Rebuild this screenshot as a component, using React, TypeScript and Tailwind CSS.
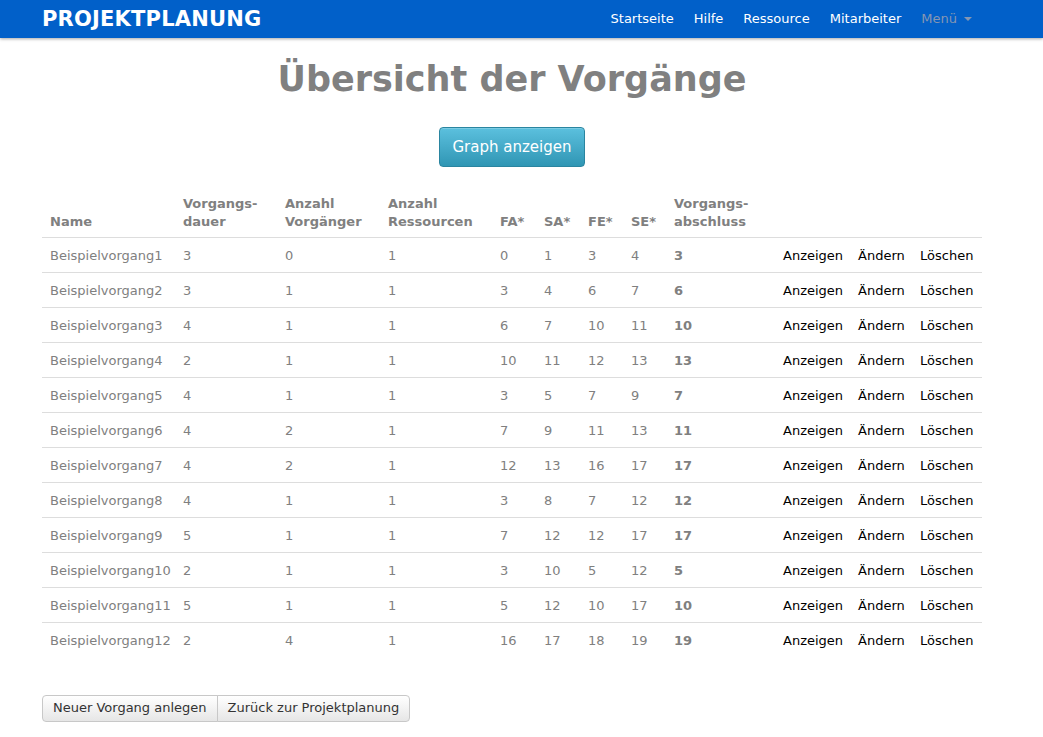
const font = "font-['DejaVu_Sans',Verdana,sans-serif]";

const rows = [
  ["Beispielvorgang1", 3, 0, 1, 0, 1, 3, 4, 3],
  ["Beispielvorgang2", 3, 1, 1, 3, 4, 6, 7, 6],
  ["Beispielvorgang3", 4, 1, 1, 6, 7, 10, 11, 10],
  ["Beispielvorgang4", 2, 1, 1, 10, 11, 12, 13, 13],
  ["Beispielvorgang5", 4, 1, 1, 3, 5, 7, 9, 7],
  ["Beispielvorgang6", 4, 2, 1, 7, 9, 11, 13, 11],
  ["Beispielvorgang7", 4, 2, 1, 12, 13, 16, 17, 17],
  ["Beispielvorgang8", 4, 1, 1, 3, 8, 7, 12, 12],
  ["Beispielvorgang9", 5, 1, 1, 7, 12, 12, 17, 17],
  ["Beispielvorgang10", 2, 1, 1, 3, 10, 5, 12, 5],
  ["Beispielvorgang11", 5, 1, 1, 5, 12, 10, 17, 10],
  ["Beispielvorgang12", 2, 4, 1, 16, 17, 18, 19, 19],
] as const;

const cols = [133, 102, 103, 112, 44, 44, 43, 43, 109, 75, 62, 70];

const headers: React.ReactNode[] = [
  "Name",
  <>Vorgangs-<br />dauer</>,
  <>Anzahl<br />Vorgänger</>,
  <>Anzahl<br />Ressourcen</>,
  "FA*",
  "SA*",
  "FE*",
  "SE*",
  <>Vorgangs-<br />abschluss</>,
  "",
  "",
  "",
];

function Navbar() {
  return (
    <div className="h-[38px] bg-[#0160c9] shadow-[0_1px_3px_rgba(0,0,0,0.35)]">
      <div className="ml-[42px] flex h-full w-[940px] items-center justify-between">
        <span className="text-[21px] font-bold tracking-[0.2px] text-white">PROJEKTPLANUNG</span>
        <nav className="flex items-center gap-[20px] pr-[10px] text-[13px] text-white">
          <span>Startseite</span>
          <span>Hilfe</span>
          <span>Ressource</span>
          <span>Mitarbeiter</span>
          <span className="flex items-center gap-[7px] text-[#8596b2]">
            Menü
            <span className="inline-block h-0 w-0 border-x-[4px] border-t-[4px] border-x-transparent border-t-[#8596b2]" />
          </span>
        </nav>
      </div>
    </div>
  );
}

export default function App() {
  return (
    <div className={`${font} min-h-[737px] bg-white text-[13px] leading-[18px]`}>
      <Navbar />
      <div className="ml-[42px] w-[940px]">
        <h1 className="mt-[19px] text-center text-[35px] leading-[44px] font-bold text-[#808080]">
          Übersicht der Vorgänge
        </h1>
        <div className="mt-[26px] flex justify-center">
          <button className="h-[40px] w-[146px] rounded-[4px] border border-[#2a85a0] bg-gradient-to-b from-[#5bc0de] to-[#2f96b4] text-[15px] text-white shadow-[inset_0_1px_0_rgba(255,255,255,0.2)]">
            Graph anzeigen
          </button>
        </div>
        <table className="mt-[20px] w-[940px] table-fixed border-collapse">
          <colgroup>
            {cols.map((w, i) => (
              <col key={i} style={{ width: w }} />
            ))}
          </colgroup>
          <thead>
            <tr>
              {headers.map((h, i) => (
                <th key={i} className="px-2 pt-2 pb-[6px] text-left align-bottom font-bold text-[#808080]">
                  {h}
                </th>
              ))}
            </tr>
          </thead>
          <tbody>
            {rows.map((r) => (
              <tr key={r[0]} className="border-t border-[#dddddd]">
                {r.map((v, i) => (
                  <td
                    key={i}
                    className={`h-[35px] px-2 pt-px align-middle text-[#808080] ${i === 8 ? "font-bold text-[#737373]" : ""}`}
                  >
                    {v}
                  </td>
                ))}
                <td className="px-2 pt-px text-black">Anzeigen</td>
                <td className="px-2 pt-px text-black">Ändern</td>
                <td className="px-2 pt-px text-black">Löschen</td>
              </tr>
            ))}
          </tbody>
        </table>
        <div className="mt-[37px] flex">
          <button className="h-[27px] rounded-l-[4px] border border-[#c8c8c8] bg-gradient-to-b from-white to-[#e6e6e6] px-[10px] text-[13px] text-[#333]">
            Neuer Vorgang anlegen
          </button>
          <button className="-ml-px h-[27px] rounded-r-[4px] border border-[#c8c8c8] bg-gradient-to-b from-white to-[#e6e6e6] px-[10px] text-[13px] text-[#333]">
            Zurück zur Projektplanung
          </button>
        </div>
      </div>
    </div>
  );
}
